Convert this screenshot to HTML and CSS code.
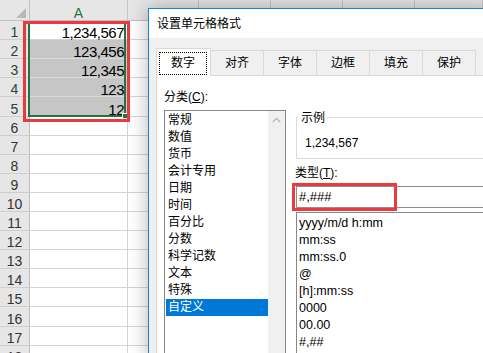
FILE: index.html
```html
<!DOCTYPE html>
<html lang="zh-CN">
<head>
  <meta charset="UTF-8">
  <title>设置单元格格式</title>
  <link rel="stylesheet" href="styles.css">
</head>
<body>
  <div class="sheet">
    <div class="row head">
      <div class="corner"><span class="tri"></span></div>
      <div class="ch ca sel">A</div>
      <div class="ch cb"></div>
      <div class="ch cc"></div>
      <div class="ch cc"></div>
      <div class="ch cc"></div>
      <div class="ch cf"></div>
    </div>
    <div class="row"><div class="rh sel">1</div><div class="cell ca active">1,234,567</div><div class="cell cb"></div></div>
    <div class="row"><div class="rh sel">2</div><div class="cell ca picked">123,456</div><div class="cell cb"></div></div>
    <div class="row"><div class="rh sel">3</div><div class="cell ca picked">12,345</div><div class="cell cb"></div></div>
    <div class="row"><div class="rh sel">4</div><div class="cell ca picked">123</div><div class="cell cb"></div></div>
    <div class="row tall"><div class="rh sel">5</div><div class="cell ca picked">12</div><div class="cell cb"></div></div>
    <div class="row"><div class="rh">6</div><div class="cell ca"></div><div class="cell cb"></div></div>
    <div class="row"><div class="rh">7</div><div class="cell ca"></div><div class="cell cb"></div></div>
    <div class="row"><div class="rh">8</div><div class="cell ca"></div><div class="cell cb"></div></div>
    <div class="row"><div class="rh">9</div><div class="cell ca"></div><div class="cell cb"></div></div>
    <div class="row"><div class="rh">10</div><div class="cell ca"></div><div class="cell cb"></div></div>
    <div class="row"><div class="rh">11</div><div class="cell ca"></div><div class="cell cb"></div></div>
    <div class="row"><div class="rh">12</div><div class="cell ca"></div><div class="cell cb"></div></div>
    <div class="row"><div class="rh">13</div><div class="cell ca"></div><div class="cell cb"></div></div>
    <div class="row"><div class="rh">14</div><div class="cell ca"></div><div class="cell cb"></div></div>
    <div class="row"><div class="rh">15</div><div class="cell ca"></div><div class="cell cb"></div></div>
    <div class="row tall"><div class="rh">16</div><div class="cell ca"></div><div class="cell cb"></div></div>
    <div class="row"><div class="rh">17</div><div class="cell ca"></div><div class="cell cb"></div></div>
    <div class="row"><div class="rh">18</div><div class="cell ca"></div><div class="cell cb"></div></div>
  </div>

  <!-- selection A1:A5 -->
  <div class="sel-range"><span class="handle"></span></div>
  <div class="mark mark-range"></div>

  <div class="dialog">
    <div class="titlebar">设置单元格格式</div>
    <div class="tabs">
      <div class="tab active"><span class="focus">数字</span></div>
      <div class="tab">对齐</div>
      <div class="tab">字体</div>
      <div class="tab">边框</div>
      <div class="tab">填充</div>
      <div class="tab">保护</div>
    </div>
    <div class="page">
      <div class="left">
        <div class="label">分类(<u>C</u>):</div>
        <div class="catlist">
          <div class="items">
            <div class="item">常规</div>
            <div class="item">数值</div>
            <div class="item">货币</div>
            <div class="item">会计专用</div>
            <div class="item">日期</div>
            <div class="item">时间</div>
            <div class="item">百分比</div>
            <div class="item">分数</div>
            <div class="item">科学记数</div>
            <div class="item">文本</div>
            <div class="item">特殊</div>
            <div class="item current">自定义</div>
          </div>
          <div class="vscroll">
            <svg class="up" width="9" height="6" viewBox="0 0 9 6"><polyline points="0.8,5 4.5,1.3 8.2,5" fill="none" stroke="#b4b4b4" stroke-width="1.3"/></svg>
          </div>
        </div>
      </div>
      <div class="right">
        <div class="group">
          <span class="legend">示例</span>
          <div class="sample">1,234,567</div>
        </div>
        <div class="label type-label">类型(<u>T</u>):</div>
        <div class="typebox">#,###</div>
        <div class="fmtlist">
          <div class="fmt">yyyy/m/d h:mm</div>
          <div class="fmt">mm:ss</div>
          <div class="fmt">mm:ss.0</div>
          <div class="fmt">@</div>
          <div class="fmt">[h]:mm:ss</div>
          <div class="fmt">0000</div>
          <div class="fmt">00.00</div>
          <div class="fmt">#,##</div>
        </div>
      </div>
    </div>
  </div>

  <div class="mark mark-type"></div>
</body>
</html>
```
FILE: styles.css
```css
* {
  box-sizing: border-box;
}
html, body {
  margin: 0;
  padding: 0;
}
body {
  width: 483px;
  height: 353px;
  overflow: hidden;
  position: relative;
  background: #fff;
  color: #000;
  font-family: "Liberation Sans", "Noto Sans CJK SC", sans-serif;
}

/* spreadsheet */
.row {
  display: flex;
  height: 19px;
}
.row.tall {
  height: 20px;
}
.row.head {
  height: 21px;
}
.corner {
  width: 30px;
  flex: none;
  background: #e6e6e6;
  border-right: 1px solid #c0c0c0;
  border-bottom: 1px solid #c0c0c0;
  position: relative;
}
.tri {
  position: absolute;
  right: 3px;
  bottom: 2px;
  width: 0;
  height: 0;
  border-left: 10px solid transparent;
  border-bottom: 10px solid #b9b9b9;
}
.ch {
  flex: none;
  background: #e6e6e6;
  border-right: 1px solid #c6c6c6;
  border-bottom: 1px solid #c0c0c0;
  display: flex;
  align-items: flex-end;
  justify-content: center;
  font-size: 14px;
  line-height: 12px;
  padding-bottom: 1px;
  color: #444;
}
.ch.sel {
  color: #2f6b50;
}
.ca { width: 98px; }
.cb { width: 71px; }
.cc { width: 72px; }
.cf { flex: 1; }

.rh {
  width: 30px;
  flex: none;
  background: #e6e6e6;
  border-right: 1px solid #c0c0c0;
  border-bottom: 1px solid #cfcfcf;
  display: flex;
  align-items: flex-end;
  justify-content: center;
  font-size: 14px;
  line-height: 12px;
  padding-bottom: 1px;
  color: #333;
}
.rh.sel {
  color: #24453a;
}
.cell {
  flex: none;
  border-right: 1px solid #d4d4d4;
  border-bottom: 1px solid #d4d4d4;
  display: flex;
  align-items: flex-end;
  justify-content: flex-end;
  font-size: 15px;
  letter-spacing: -0.5px;
  line-height: 12px;
  padding-right: 3px;
}
.cell.picked {
  background: #c6c6c6;
  border-bottom-color: #dadada;
}

.sel-range {
  position: absolute;
  left: 28px;
  top: 22px;
  width: 98px;
  height: 95px;
  border: 2px solid #217346;
}
.handle {
  position: absolute;
  right: -4px;
  bottom: -4px;
  width: 6px;
  height: 6px;
  background: #217346;
  border: 1px solid #fff;
}
.mark {
  position: absolute;
  border: 3px solid #e93a3e;
  z-index: 5;
}
.mark-range {
  left: 23px;
  top: 21px;
  width: 107px;
  height: 101px;
}
.mark-type {
  left: 292px;
  top: 183px;
  width: 105px;
  height: 28px;
}

/* dialog */
.dialog {
  position: absolute;
  left: 148px;
  top: 8px;
  width: 345px;
  height: 350px;
  border: 1px solid #1883d7;
  background: #f0f0f0;
  box-shadow: 0 0 18px rgba(0, 0, 0, 0.3);
  font-size: 12px;
}
.titlebar {
  height: 29px;
  background: #fff;
  padding: 1px 0 0 8px;
  line-height: 28px;
}
.tabs {
  display: flex;
  align-items: flex-end;
  height: 37px;
  padding: 10px 0 0 7px;
}
.tab {
  flex: none;
  width: 53px;
  height: 25px;
  border-top: 1px solid #d9d9d9;
  border-right: 1px solid #d9d9d9;
  text-align: center;
  line-height: 24px;
}
.tab.active {
  position: relative;
  z-index: 1;
  width: 55px;
  height: 28px;
  margin-bottom: -1px;
  background: #fff;
  border: 1px solid #d9d9d9;
  border-bottom: none;
  padding: 3px 3px 0 2px;
}
.focus {
  display: block;
  height: 23px;
  border: 1px dotted #000;
  line-height: 21px;
}
.page {
  display: flex;
  height: 290px;
  margin-left: 7px;
  background: #fff;
  border-left: 1px solid #d9d9d9;
  border-top: 1px solid #d9d9d9;
}
.left {
  flex: none;
  padding: 13px 0 0 7px;
}
.label {
  line-height: 16px;
}
.catlist {
  display: flex;
  width: 122px;
  height: 250px;
  margin-top: 5px;
  border: 1px solid #828790;
}
.items {
  width: 103px;
  padding: 1px 0 0 1px;
}
.item {
  height: 17px;
  line-height: 17px;
  padding-left: 2px;
}
.item.current {
  background: #0078d7;
  color: #fff;
}
.vscroll {
  width: 17px;
  background: #f0f0f0;
}
.up {
  display: block;
  margin: 6px auto 0;
}

.right {
  flex: 1;
  margin-left: 10px;
  padding-top: 41px;
}
.group {
  height: 42px;
  border: 1px solid #dcdcdc;
}
.legend {
  display: block;
  width: fit-content;
  margin: -8px 0 0 2px;
  padding: 0 2px;
  background: #fff;
  line-height: 16px;
}
.sample {
  margin-top: 9px;
  padding-left: 8px;
  line-height: 16px;
}
.type-label {
  margin: 6px 0 0 -1px;
}
.typebox {
  height: 22px;
  margin-top: 5px;
  border: 1px solid #8f8f8f;
  padding-left: 2px;
  font-size: 13px;
  line-height: 20px;
}
.fmtlist {
  height: 150px;
  margin-top: 4px;
  border: 1px solid #828790;
  padding: 2px 0 0 2px;
  font-size: 12.5px;
}
.fmt {
  height: 17px;
  line-height: 17px;
}
```
